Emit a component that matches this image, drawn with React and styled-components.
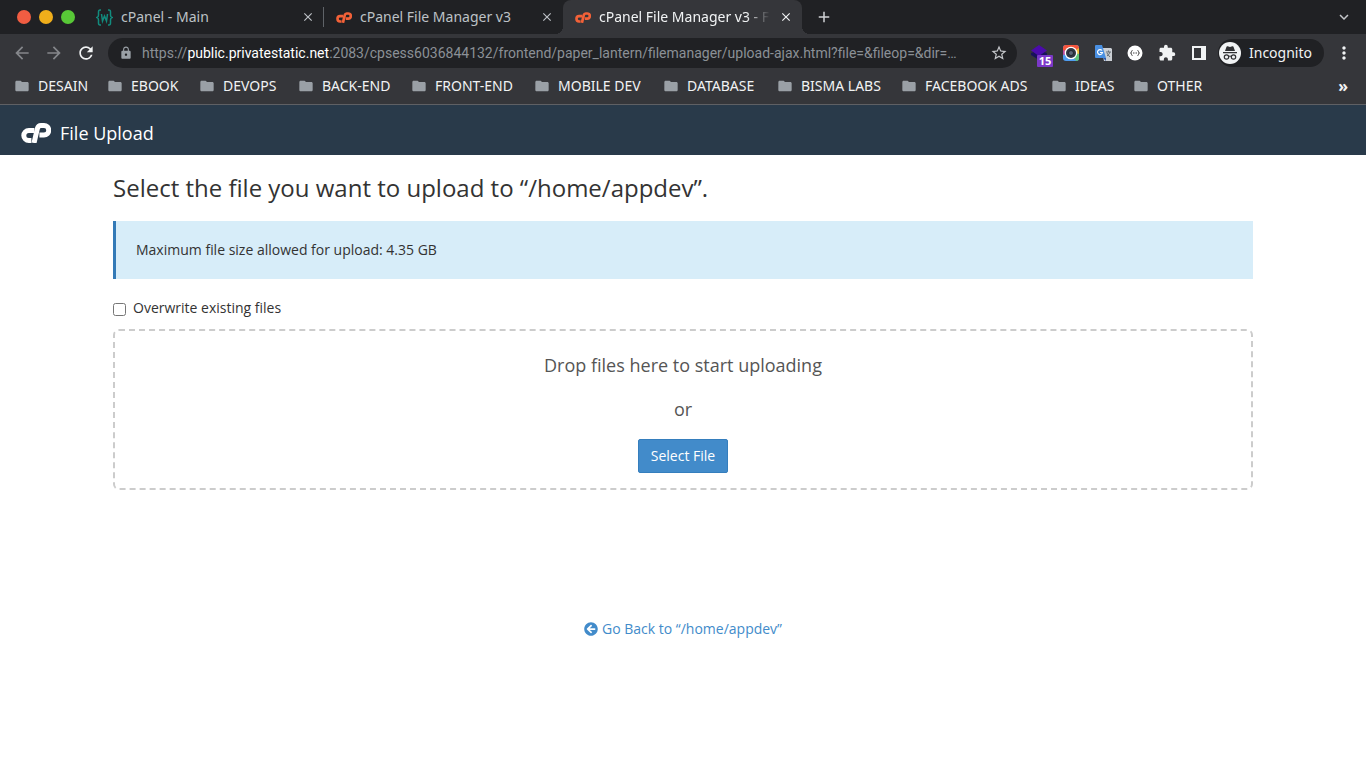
import React from "react";
import styled, { createGlobalStyle, css } from "styled-components";
import { MdArrowBack, MdArrowForward, MdRefresh, MdLock, MdStarBorder, MdExtension, MdFolder, MdMoreVert, MdClose, MdAdd, MdExpandMore } from "react-icons/md";
import { FaArrowCircleLeft } from "react-icons/fa";

const GlobalStyle = createGlobalStyle`
  *, *::before, *::after { box-sizing: border-box; }
  body { margin: 0; background: #fff; color: #333; font: 14px/20px "Open Sans", "Noto Sans", sans-serif; }
  button { font: inherit; border: 0; padding: 0; background: none; color: inherit; cursor: pointer; }
  svg { display: block; flex: none; }
`;

const Browser = styled.header`
  background: #35363a;
  color: #f1f3f4;
  font-family: "Noto Sans", "Open Sans", sans-serif;
  border-bottom: 1px solid #5f6064;
`;

const TabBar = styled.div`
  display: flex;
  height: 34px;
  background: #202124;
`;

const WindowControls = styled.div`
  display: flex;
  align-items: center;
  gap: 8px;
  width: 84px;
  padding-left: 17px;
`;

const WindowButton = styled.button`
  width: 14px;
  height: 14px;
  border-radius: 50%;
  background: ${(p) => p.$color};
`;

const Tab = styled.div`
  position: relative;
  display: flex;
  align-items: center;
  width: ${(p) => (p.$divided ? 240 : 239)}px;
  padding: 0 8px 0 12px;
  gap: 8px;
  color: #bdc1c6;
  ${(p) => p.$divided && css`background: linear-gradient(#5f6368, #5f6368) right center / 1px 20px no-repeat;`}
  ${(p) => p.$active && css`
    background: #35363a;
    color: #f1f3f4;
    border-radius: 8px 8px 0 0;
    &::before, &::after {
      content: "";
      position: absolute;
      bottom: 0;
      width: 8px;
      height: 8px;
    }
    &::before { left: -8px; background: radial-gradient(circle at 0 0, transparent 8px, #35363a 8px); }
    &::after { right: -8px; background: radial-gradient(circle at 100% 0, transparent 8px, #35363a 8px); }
  `}
`;

const TabTitle = styled.span`
  flex: 1;
  min-width: 0;
  overflow: hidden;
  white-space: nowrap;
  ${(p) => p.$fade && css`mask-image: linear-gradient(to right, #000 86%, transparent);`}
`;

const IconButton = styled.button`
  display: flex;
  align-items: center;
  justify-content: center;
  flex: none;
  width: ${(p) => p.$size || 16}px;
  height: ${(p) => p.$size || 16}px;
  color: ${(p) => p.$color || "inherit"};
`;

const NewTab = styled(IconButton)`
  margin: 7px 0 0 12px;
`;

const TabSearch = styled(IconButton)`
  margin: 7px 12px 0 auto;
`;

const Toolbar = styled.div`
  display: flex;
  align-items: center;
  height: 38px;
  padding: 0 12px;
`;

const Navigation = styled.div`
  display: flex;
  gap: 12px;
  width: 96px;
`;

const AddressBar = styled.div`
  display: flex;
  align-items: center;
  flex: 1;
  min-width: 0;
  height: 30px;
  padding: 0 9px 0 11px;
  border-radius: 15px;
  background: #202124;
  color: #9aa0a6;
`;

const Address = styled.div`
  flex: 1;
  min-width: 0;
  margin: 0 8px 0 9px;
  font-family: Roboto, "Noto Sans", sans-serif;
  overflow: hidden;
  white-space: nowrap;
  color: #8b9096;
`;

const Host = styled.span`
  color: #fff;
`;

const Extensions = styled.div`
  display: flex;
  align-items: center;
  gap: 12px;
  margin: 0 9px 0 12px;
`;

const Extension = styled(IconButton)`
  position: relative;
`;

const Badge = styled.span`
  position: absolute;
  left: 8px;
  top: 12px;
  width: 16px;
  height: 12px;
  border-radius: 1px;
  background: #7b38c8;
  color: #fff;
  font: bold 11px/12px "Noto Sans", sans-serif;
  text-align: center;
`;

const Incognito = styled.button`
  display: flex;
  align-items: center;
  gap: 8px;
  width: 106px;
  height: 28px;
  padding: 0 1px;
  border-radius: 14px;
  background: #202124;
`;

const Menu = styled(IconButton)`
  margin-left: 10px;
`;

const BookmarkBar = styled.nav`
  display: flex;
  align-items: center;
  height: 32px;
  padding: 0 18px 4px 14px;
`;

const Bookmark = styled.a`
  display: flex;
  align-items: center;
  gap: 8px;
  width: ${(p) => p.$width}px;
  color: inherit;
  text-decoration: none;
  white-space: nowrap;
  svg { color: #9aa0a6; }
`;

const MoreBookmarks = styled.button`
  margin-left: auto;
  font-size: 16px;
  line-height: 16px;
  font-weight: bold;
`;

const PageHeader = styled.div`
  display: flex;
  align-items: center;
  gap: 9px;
  height: 50px;
  padding: 6px 21px 0;
  background: #293a4a;
  color: #fff;
  font-size: 18px;
`;

const Content = styled.main`
  width: 100%;
  max-width: 1170px;
  margin: 0 auto;
  padding: 20px 15px;
`;

const Title = styled.h1`
  margin: 0 0 20px;
  font-size: 24px;
  line-height: 26px;
  font-weight: 400;
`;

const Notice = styled.p`
  margin: 0 0 19px;
  padding: 19px 20px;
  border-left: 3px solid #337ab7;
  background: #d7edf9;
`;

const CheckRow = styled.label`
  display: flex;
  align-items: center;
  gap: 7px;
  margin-bottom: 11px;
  line-height: 20px;
  input { width: 13px; height: 13px; margin: 2px 0 0; }
`;

const DropZone = styled.section`
  display: flex;
  flex-direction: column;
  align-items: center;
  padding: 22px 16px 15px;
  border: 2px dashed #ccc;
  border-radius: 6px;
  color: #555;
  font-size: 18px;
  line-height: 24px;
  p { margin: 0 0 20px; }
  p + p { margin-bottom: 18px; }
`;

const PrimaryButton = styled.button`
  height: 34px;
  padding: 0 12px;
  border: 1px solid #357ebd;
  border-radius: 2px;
  background: #428bca;
  color: #fff;
  font-size: 14px;
`;

const BackRow = styled.div`
  display: flex;
  justify-content: center;
  margin-top: 129px;
`;

const BackLink = styled.a`
  display: flex;
  align-items: center;
  gap: 4px;
  color: #428bca;
  text-decoration: none;
`;

const CpLogo = ({ width, height, color }) => (
  <svg width={width} height={height} viewBox="0 0 30 20" fill="none" stroke={color} strokeWidth="5" aria-hidden="true">
    <path d="M13.400 7.500H7.800a5 5 0 0 0 0 10h2.600" />
    <path d="M13 20 16.400 5.500Q17.200 2.500 20 2.500h3a4.500 4.500 0 0 1 0 9.500h-4.600" />
  </svg>
);

const BracesIcon = () => (
  <svg width="17" height="17" viewBox="0 0 17 17" fill="none" stroke="#128c7e" strokeWidth="1.5" aria-hidden="true">
    <path d="M5 1H4Q2.500 1 2.500 3v3Q2.500 8 1 8.500q1.500.500 1.500 2.500v3q0 2 1.500 2h1M12 1h1q1.500 0 1.500 2v3q0 2 1.500 2.500-1.500.500-1.500 2.500v3q0 2-1.500 2h-1M5.500 5l1 7 2-5 2 5 1-7" />
  </svg>
);

const GraduationIcon = () => (
  <svg width="18" height="18" viewBox="0 0 18 18" aria-hidden="true">
    <path d="m1 9 3-1 5 4 5-4 3 1v2l-8 5-8-5z" fill="#18115c" />
    <path d="m9 1 8 5.500-8 5.500-8-5.500z" fill="#4b0bab" />
  </svg>
);

const CameraIcon = () => (
  <svg width="16" height="16" viewBox="0 0 16 16" aria-hidden="true">
    <rect width="16" height="16" rx="3" fill="#4f9df0" />
    <path d="M0 8V3q0-3 3-3h10q3 0 3 3v2L8 8z" fill="#f4553d" />
    <path d="m8 8 8-5v6z" fill="#f6bd35" />
    <path d="m8 8 8 1v4q0 3-3 3z" fill="#61c579" />
    <path d="M0 5v5l8-2z" fill="#bd4ca3" />
    <circle cx="8" cy="8" r="6.300" fill="#fff" />
    <circle cx="8" cy="8" r="5" fill="#303744" />
    <circle cx="8" cy="8" r="2.500" fill="#5c6678" stroke="#20242d" />
  </svg>
);

const TranslateIcon = () => (
  <svg width="17" height="17" viewBox="0 0 17 17" aria-hidden="true">
    <path d="M6 3h10l1 1v12H9z" fill="#ccd0d5" />
    <path d="M0 1q0-1 1-1h6l4 13H1q-1 0-1-1z" fill="#4a90e2" />
    <path d="m8 13 3 3v-3z" fill="#3159a8" />
    <path d="M7 5.500a2.500 2.500 0 1 0 .500 2H5" fill="none" stroke="#fff" strokeWidth="1.200" />
    <path d="M11 7h5M13.500 5.500V7m1.500 0q-1 3-3 4m0-3q1 2 3 4" fill="none" stroke="#687078" />
  </svg>
);

const JsonIcon = () => (
  <svg width="16" height="16" viewBox="0 0 16 16" aria-hidden="true">
    <circle cx="8" cy="8" r="7.500" fill="#fff" />
    <path d="M5.500 5.500Q4.500 5.500 4.500 6.700T3.500 8q1 0 1 1.300t1 1.200m5-5q1 0 1 1.200t1 1.300q-1 0-1 1.300t-1 1.200M6 8h1m.500 0h1m.500 0h1" fill="none" stroke="#444" />
  </svg>
);

const SidePanelIcon = () => (
  <svg width="14" height="14" viewBox="0 0 14 14" aria-hidden="true">
    <path d="M0 0h14v14H0zM2 2v10h7V2z" fill="#f1f3f4" fillRule="evenodd" />
  </svg>
);

const IncognitoIcon = () => (
  <svg width="22" height="22" viewBox="0 0 22 22" aria-hidden="true">
    <circle cx="11" cy="11" r="11" fill="#f1f3f4" />
    <path d="M6 9 7.500 4.800q.3-.8 1.200-.5l2.300.6 2.300-.6q.9-.3 1.200.5L16 9zM4 10h14v1.200H4z" fill="#303134" />
    <path d="M9.500 14.500q1.500-1 3 0" fill="none" stroke="#303134" />
    <circle cx="7.500" cy="15" r="2.200" fill="none" stroke="#303134" strokeWidth="1.200" />
    <circle cx="14.500" cy="15" r="2.200" fill="none" stroke="#303134" strokeWidth="1.200" />
  </svg>
);

const bookmarks = [
  ["DESAIN", 93], ["EBOOK", 92], ["DEVOPS", 99], ["BACK-END", 113], ["FRONT-END", 123], ["MOBILE DEV", 129],
  ["DATABASE", 114], ["BISMA LABS", 124], ["FACEBOOK ADS", 150], ["IDEAS", 82], ["OTHER", 80],
];

export default function App() {
  return (
    <>
      <GlobalStyle />
      <Browser>
        <TabBar>
          <WindowControls>
            <WindowButton $color="#f15d42" aria-label="Close window" />
            <WindowButton $color="#f0ae1b" aria-label="Minimize window" />
            <WindowButton $color="#58c837" aria-label="Maximize window" />
          </WindowControls>
          <Tab $divided>
            <BracesIcon />
            <TabTitle>cPanel - Main</TabTitle>
            <IconButton aria-label="Close tab"><MdClose size={14} /></IconButton>
          </Tab>
          <Tab>
            <CpLogo width={16} height={11} color="#f26138" />
            <TabTitle>cPanel File Manager v3</TabTitle>
            <IconButton aria-label="Close tab"><MdClose size={14} /></IconButton>
          </Tab>
          <Tab $active>
            <CpLogo width={16} height={11} color="#f26138" />
            <TabTitle $fade>cPanel File Manager v3 - File Upload</TabTitle>
            <IconButton aria-label="Close tab"><MdClose size={14} /></IconButton>
          </Tab>
          <NewTab $size={20} $color="#d0d2d5" aria-label="New tab"><MdAdd size={18} /></NewTab>
          <TabSearch $size={20} $color="#c4c6ca" aria-label="Search tabs"><MdExpandMore size={18} /></TabSearch>
        </TabBar>
        <Toolbar>
          <Navigation>
            <IconButton $size={20} $color="#85878b" aria-label="Back"><MdArrowBack size={20} /></IconButton>
            <IconButton $size={20} $color="#85878b" aria-label="Forward"><MdArrowForward size={20} /></IconButton>
            <IconButton $size={20} aria-label="Reload"><MdRefresh size={20} /></IconButton>
          </Navigation>
          <AddressBar>
            <MdLock size={14} />
            <Address>
              https://<Host>public.privatestatic.net</Host>:2083/cpsess6036844132/frontend/paper_lantern/filemanager/upload-ajax.html?file=&amp;fileop=&amp;dir=…
            </Address>
            <IconButton $size={18} $color="#c4c6ca" aria-label="Bookmark this page"><MdStarBorder size={18} /></IconButton>
          </AddressBar>
          <Extensions>
            <Extension $size={20} aria-label="Courses, 15 new"><GraduationIcon /><Badge>15</Badge></Extension>
            <Extension $size={20} aria-label="Screen capture"><CameraIcon /></Extension>
            <Extension $size={20} aria-label="Translate"><TranslateIcon /></Extension>
            <Extension $size={20} aria-label="JSON viewer"><JsonIcon /></Extension>
            <Extension $size={20} aria-label="Extensions"><MdExtension size={18} /></Extension>
            <Extension $size={20} aria-label="Side panel"><SidePanelIcon /></Extension>
          </Extensions>
          <Incognito><IncognitoIcon />Incognito</Incognito>
          <Menu $size={20} aria-label="Menu"><MdMoreVert size={20} /></Menu>
        </Toolbar>
        <BookmarkBar>
          {bookmarks.map(([label, width]) => (
            <Bookmark key={label} href="#" $width={width}><MdFolder size={16} />{label}</Bookmark>
          ))}
          <MoreBookmarks aria-label="More bookmarks">»</MoreBookmarks>
        </BookmarkBar>
      </Browser>
      <PageHeader>
        <CpLogo width={30} height={20} color="#fff" />
        File Upload
      </PageHeader>
      <Content>
        <Title>Select the file you want to upload to “/home/appdev”.</Title>
        <Notice>Maximum file size allowed for upload: 4.35 GB</Notice>
        <CheckRow><input type="checkbox" />Overwrite existing files</CheckRow>
        <DropZone>
          <p>Drop files here to start uploading</p>
          <p>or</p>
          <PrimaryButton>Select File</PrimaryButton>
        </DropZone>
        <BackRow>
          <BackLink href="#"><FaArrowCircleLeft size={14} />Go Back to “/home/appdev”</BackLink>
        </BackRow>
      </Content>
    </>
  );
}
